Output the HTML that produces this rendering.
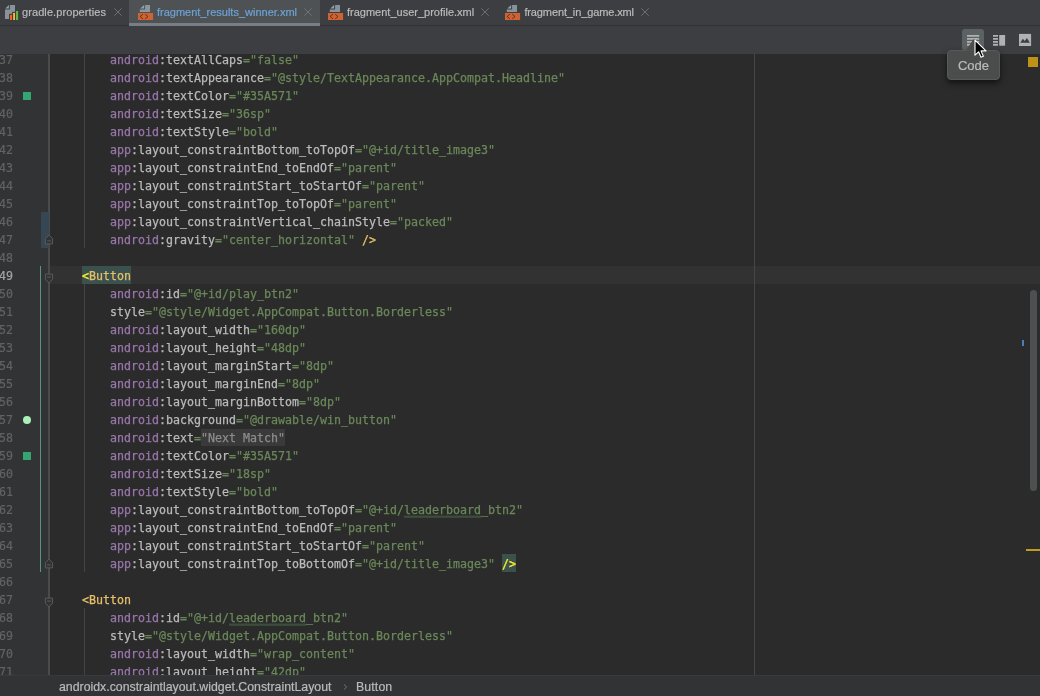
<!DOCTYPE html>
<html><head><meta charset="utf-8"><title>editor</title>
<style>
html,body{margin:0;padding:0;}
body{width:1040px;height:696px;overflow:hidden;background:#2b2b2b;position:relative;font-family:"Liberation Sans",sans-serif;}
.abs{position:absolute;}
#tabs{left:0;top:0;width:1040px;height:26px;background:#3c3e41;}
#tabline{left:0;top:25px;width:1040px;height:1px;background:#323232;}
#seltab{left:129px;top:0;width:191px;height:26px;background:#4e5254;}
#selul{left:129px;top:23px;width:191px;height:3px;background:#787e85;}
.tl{-webkit-text-stroke:.2px;position:absolute;top:5px;font-size:11px;line-height:15px;color:#bbbbbb;white-space:pre;}
.ico{position:absolute;top:5px;}
.cx{position:absolute;top:8px;}
#toolbar{left:0;top:26px;width:1040px;height:28px;background:#3c3e41;}
#editor{left:0;top:54px;width:1040px;height:621px;overflow:hidden;background:#2b2b2b;}
#gutter{left:0;top:0;width:48px;height:621px;background:#313335;}
#foldline{left:48px;top:0;width:2px;height:621px;background:#4b4b4b;}
#nums{left:-19px;top:-4px;width:32px;text-align:right;-webkit-text-stroke:.2px;font:11.63px/20px "DejaVu Sans Mono","Liberation Mono",monospace;color:#606366;}
#code{left:54px;top:-4px;font:11.63px/20px "DejaVu Sans Mono","Liberation Mono",monospace;color:#a9b7c6;white-space:pre;-webkit-text-stroke:0.25px;}
.ln,#nums div{height:18px;} .cur{color:#a4a3a3}
.ns{color:#9876aa} .an{color:#bababa} .s{color:#6a8759} .t{color:#e8bf6a}
.mt{color:#ffef28;background:#3b514d;display:inline-block;height:18px;vertical-align:top;} 
.fold{color:#8c8c8c;background:#3a3a3a;display:inline-block;height:17px;vertical-align:top;position:relative;top:.5px;line-height:19px;}
.sw{color:#6a8759;}
#caretrow{left:50px;top:212px;width:990px;height:18px;background:#323232;}
#margin{left:754px;top:0;width:1px;height:621px;background:#464646;}
.guide{position:absolute;width:1px;background:#444444;left:84px;}
#crumbs{left:0;top:675px;width:1040px;height:21px;background:#313335;box-shadow:inset 0 1px 0 #393a3d;}
#crumbs span{-webkit-text-stroke:.2px;position:absolute;top:4px;font-size:12.32px;line-height:17px;color:#bbbbbb;white-space:pre;}
#root{position:absolute;left:0;top:0;width:1040px;height:696px;overflow:hidden;will-change:transform;}
</style></head><body><div id="root">
<div id="tabs" class="abs"></div>
<div id="tabline" class="abs"></div>
<div id="seltab" class="abs"></div>
<div id="selul" class="abs"></div>
<svg class="ico" style="left:5px" width="16" height="16" viewBox="0 0 16 16"><path d="M3.9 0V3.6H0.3Z" fill="#9aa7b0" fill-opacity=".95"/><path d="M4.9 0H10V14H0V4.6H4.9Z" fill="#9aa7b0" fill-opacity=".8"/><rect x="4" y="8.8" width="4" height="7" fill="#3c3e41"/><rect x="7.1" y="6.9" width="4" height="9" fill="#3c3e41"/><rect x="10" y="5" width="4.2" height="11" fill="#3c3e41"/><rect x="5" y="9.8" width="2" height="5.2" fill="#f26522"/><rect x="8.1" y="7.9" width="1.9" height="7.1" fill="#f9b934"/><rect x="11" y="6" width="2.1" height="9" fill="#62b543"/></svg>
<span class="tl" style="left:22px;letter-spacing:.085px">gradle.properties</span>
<svg class="cx" style="left:114.1px" width="8" height="8" viewBox="0 0 8 8"><path d="M.3.3 7.7 7.7M7.7.3.3 7.7" stroke="#6c767b" stroke-width=".9" fill="none"/></svg>
<svg class="ico" style="left:138px" width="16" height="16" viewBox="0 0 16 16"><path d="M6.1 0V3.6H2.3Z" fill="#9aa7b0" fill-opacity=".95"/><path d="M7.1 0H12V7H1.8V4.6H7.1Z" fill="#9aa7b0" fill-opacity=".8"/><rect x="0" y="8" width="15.1" height="7" fill="#cf6230"/><path d="M4.9 9.2 2.1 11.5 4.9 13.8M7.2 9.2 10 11.5 7.2 13.8" stroke="#231f20" stroke-opacity=".8" stroke-width=".85" fill="none"/></svg>
<span class="tl" style="left:157px;color:#6ea2d4">fragment_results_winner.xml</span>
<svg class="cx" style="left:304px" width="8" height="8" viewBox="0 0 8 8"><path d="M.3.3 7.7 7.7M7.7.3.3 7.7" stroke="#6c767b" stroke-width=".9" fill="none"/></svg>
<svg class="ico" style="left:328px" width="16" height="16" viewBox="0 0 16 16"><path d="M6.1 0V3.6H2.3Z" fill="#9aa7b0" fill-opacity=".95"/><path d="M7.1 0H12V7H1.8V4.6H7.1Z" fill="#9aa7b0" fill-opacity=".8"/><rect x="0" y="8" width="15.1" height="7" fill="#cf6230"/><path d="M4.9 9.2 2.1 11.5 4.9 13.8M7.2 9.2 10 11.5 7.2 13.8" stroke="#231f20" stroke-opacity=".8" stroke-width=".85" fill="none"/></svg>
<span class="tl" style="left:347px">fragment_user_profile.xml</span>
<svg class="cx" style="left:481.4px" width="8" height="8" viewBox="0 0 8 8"><path d="M.3.3 7.7 7.7M7.7.3.3 7.7" stroke="#6c767b" stroke-width=".9" fill="none"/></svg>
<svg class="ico" style="left:505px" width="16" height="16" viewBox="0 0 16 16"><path d="M6.1 0V3.6H2.3Z" fill="#9aa7b0" fill-opacity=".95"/><path d="M7.1 0H12V7H1.8V4.6H7.1Z" fill="#9aa7b0" fill-opacity=".8"/><rect x="0" y="8" width="15.1" height="7" fill="#cf6230"/><path d="M4.9 9.2 2.1 11.5 4.9 13.8M7.2 9.2 10 11.5 7.2 13.8" stroke="#231f20" stroke-opacity=".8" stroke-width=".85" fill="none"/></svg>
<span class="tl" style="left:524.4px;letter-spacing:-.12px">fragment_in_game.xml</span>
<svg class="cx" style="left:641.4px" width="8" height="8" viewBox="0 0 8 8"><path d="M.3.3 7.7 7.7M7.7.3.3 7.7" stroke="#6c767b" stroke-width=".9" fill="none"/></svg>
<div id="toolbar" class="abs"></div>
<div id="editor" class="abs">
 <div id="caretrow" class="abs"></div>
 <div id="margin" class="abs"></div>
 <div id="gutter" class="abs"></div>
 <div id="foldline" class="abs"></div>
 <div class="guide" style="top:0;height:194px"></div>
 <div class="guide" style="top:230px;height:288px"></div>
 <div class="guide" style="top:554px;height:70px"></div>

 <div class="abs" style="left:41px;top:158px;width:7.6px;height:36px;background:#364652"></div>
 <div class="abs" style="left:40px;top:212px;width:1px;height:306px;background:#5b928c"></div>
 <div class="abs" style="left:23px;top:38px;width:8px;height:8px;background:#35a571"></div>
 <div class="abs" style="left:23px;top:398px;width:8px;height:8px;background:#35a571"></div>
 <div class="abs" style="left:23px;top:361.6px;width:8.4px;height:8.6px;border-radius:50%;background:#aaf0b9"></div>
 <svg class="abs fm" style="left:44px;top:180px" width="10" height="11" viewBox="0 0 10 11"><path d="M1.4 9.9V4.6L5 1.1 8.6 4.6V9.9Z" fill="#313335" stroke="#5e5e5e" stroke-width="0.9"/><path d="M3.2 6.9h3.6" stroke="#5a5a5a" stroke-width="1.1"/></svg>
 <svg class="abs fm" style="left:44px;top:504px" width="10" height="11" viewBox="0 0 10 11"><path d="M1.4 9.9V4.6L5 1.1 8.6 4.6V9.9Z" fill="#313335" stroke="#5e5e5e" stroke-width="0.9"/><path d="M3.2 6.9h3.6" stroke="#5a5a5a" stroke-width="1.1"/></svg>
 <svg class="abs fm" style="left:44px;top:218.5px" width="10" height="11" viewBox="0 0 10 11"><path d="M1.4 1.1V6.4L5 9.9 8.6 6.4V1.1Z" fill="#313335" stroke="#5e5e5e" stroke-width="0.9"/><path d="M3.2 4.1h3.6" stroke="#5a5a5a" stroke-width="1.1"/></svg>
 <svg class="abs fm" style="left:44px;top:542.5px" width="10" height="11" viewBox="0 0 10 11"><path d="M1.4 1.1V6.4L5 9.9 8.6 6.4V1.1Z" fill="#313335" stroke="#5e5e5e" stroke-width="0.9"/><path d="M3.2 4.1h3.6" stroke="#5a5a5a" stroke-width="1.1"/></svg>
 <div class="abs" style="left:1030px;top:236px;width:7px;height:201px;border-radius:3.5px;background:#4d4f50"></div>
 <div class="abs" style="left:1022px;top:286px;width:2px;height:6px;background:#4a7fb5"></div>
 <div class="abs" style="left:1026px;top:495px;width:14px;height:2px;background:#c29a1e"></div>
 <div class="abs" style="left:1028px;top:3px;width:10px;height:10px;background:#be9117"></div>
 <svg class="abs" style="left:403.5px;top:461px" width="78" height="4" viewBox="0 0 78 4"><polyline points="0,2.9 1,0.5 2,2.9 3,0.5 4,2.9 5,0.5 6,2.9 7,0.5 8,2.9 9,0.5 10,2.9 11,0.5 12,2.9 13,0.5 14,2.9 15,0.5 16,2.9 17,0.5 18,2.9 19,0.5 20,2.9 21,0.5 22,2.9 23,0.5 24,2.9 25,0.5 26,2.9 27,0.5 28,2.9 29,0.5 30,2.9 31,0.5 32,2.9 33,0.5 34,2.9 35,0.5 36,2.9 37,0.5 38,2.9 39,0.5 40,2.9 41,0.5 42,2.9 43,0.5 44,2.9 45,0.5 46,2.9 47,0.5 48,2.9 49,0.5 50,2.9 51,0.5 52,2.9 53,0.5 54,2.9 55,0.5 56,2.9 57,0.5 58,2.9 59,0.5 60,2.9 61,0.5 62,2.9 63,0.5 64,2.9 65,0.5 66,2.9 67,0.5 68,2.9 69,0.5 70,2.9 71,0.5 72,2.9 73,0.5 74,2.9 75,0.5 76,2.9 77,0.5" fill="none" stroke="#62925f" stroke-opacity=".5" stroke-width="0.7"/></svg>
 <svg class="abs" style="left:228.5px;top:569px" width="78" height="4" viewBox="0 0 78 4"><polyline points="0,2.9 1,0.5 2,2.9 3,0.5 4,2.9 5,0.5 6,2.9 7,0.5 8,2.9 9,0.5 10,2.9 11,0.5 12,2.9 13,0.5 14,2.9 15,0.5 16,2.9 17,0.5 18,2.9 19,0.5 20,2.9 21,0.5 22,2.9 23,0.5 24,2.9 25,0.5 26,2.9 27,0.5 28,2.9 29,0.5 30,2.9 31,0.5 32,2.9 33,0.5 34,2.9 35,0.5 36,2.9 37,0.5 38,2.9 39,0.5 40,2.9 41,0.5 42,2.9 43,0.5 44,2.9 45,0.5 46,2.9 47,0.5 48,2.9 49,0.5 50,2.9 51,0.5 52,2.9 53,0.5 54,2.9 55,0.5 56,2.9 57,0.5 58,2.9 59,0.5 60,2.9 61,0.5 62,2.9 63,0.5 64,2.9 65,0.5 66,2.9 67,0.5 68,2.9 69,0.5 70,2.9 71,0.5 72,2.9 73,0.5 74,2.9 75,0.5 76,2.9 77,0.5" fill="none" stroke="#62925f" stroke-opacity=".5" stroke-width="0.7"/></svg>
 <div id="nums" class="abs">
<div>37</div>
<div>38</div>
<div>39</div>
<div>40</div>
<div>41</div>
<div>42</div>
<div>43</div>
<div>44</div>
<div>45</div>
<div>46</div>
<div>47</div>
<div>48</div>
<div class="cur">49</div>
<div>50</div>
<div>51</div>
<div>52</div>
<div>53</div>
<div>54</div>
<div>55</div>
<div>56</div>
<div>57</div>
<div>58</div>
<div>59</div>
<div>60</div>
<div>61</div>
<div>62</div>
<div>63</div>
<div>64</div>
<div>65</div>
<div>66</div>
<div>67</div>
<div>68</div>
<div>69</div>
<div>70</div>
<div>71</div>
 </div>
 <div id="code" class="abs"><div class="ln">        <span class="ns">android</span><span class="an">:textAllCaps</span><span class="s">="false"</span></div><div class="ln">        <span class="ns">android</span><span class="an">:textAppearance</span><span class="s">="@style/TextAppearance.AppCompat.Headline"</span></div><div class="ln">        <span class="ns">android</span><span class="an">:textColor</span><span class="s">="#35A571"</span></div><div class="ln">        <span class="ns">android</span><span class="an">:textSize</span><span class="s">="36sp"</span></div><div class="ln">        <span class="ns">android</span><span class="an">:textStyle</span><span class="s">="bold"</span></div><div class="ln">        <span class="ns">app</span><span class="an">:layout_constraintBottom_toTopOf</span><span class="s">="@+id/title_image3"</span></div><div class="ln">        <span class="ns">app</span><span class="an">:layout_constraintEnd_toEndOf</span><span class="s">="parent"</span></div><div class="ln">        <span class="ns">app</span><span class="an">:layout_constraintStart_toStartOf</span><span class="s">="parent"</span></div><div class="ln">        <span class="ns">app</span><span class="an">:layout_constraintTop_toTopOf</span><span class="s">="parent"</span></div><div class="ln">        <span class="ns">app</span><span class="an">:layout_constraintVertical_chainStyle</span><span class="s">="packed"</span></div><div class="ln">        <span class="ns">android</span><span class="an">:gravity</span><span class="s">="center_horizontal"</span><span class="t"> /&gt;</span></div><div class="ln"></div><div class="ln">    <span class="mt">&lt;<span class="t">Button</span></span></div><div class="ln">        <span class="ns">android</span><span class="an">:id</span><span class="s">="@+id/play_btn2"</span></div><div class="ln">        <span class="an">style</span><span class="s">="@style/Widget.AppCompat.Button.Borderless"</span></div><div class="ln">        <span class="ns">android</span><span class="an">:layout_width</span><span class="s">="160dp"</span></div><div class="ln">        <span class="ns">android</span><span class="an">:layout_height</span><span class="s">="48dp"</span></div><div class="ln">        <span class="ns">android</span><span class="an">:layout_marginStart</span><span class="s">="8dp"</span></div><div class="ln">        <span class="ns">android</span><span class="an">:layout_marginEnd</span><span class="s">="8dp"</span></div><div class="ln">        <span class="ns">android</span><span class="an">:layout_marginBottom</span><span class="s">="8dp"</span></div><div class="ln">        <span class="ns">android</span><span class="an">:background</span><span class="s">="@drawable/win_button"</span></div><div class="ln">        <span class="ns">android</span><span class="an">:text</span><span class="s">=</span><span class="fold">"Next Match"</span></div><div class="ln">        <span class="ns">android</span><span class="an">:textColor</span><span class="s">="#35A571"</span></div><div class="ln">        <span class="ns">android</span><span class="an">:textSize</span><span class="s">="18sp"</span></div><div class="ln">        <span class="ns">android</span><span class="an">:textStyle</span><span class="s">="bold"</span></div><div class="ln">        <span class="ns">app</span><span class="an">:layout_constraintBottom_toTopOf</span><span class="s">="@+id/</span><span class="sw">leaderboard</span><span class="s">_btn2"</span></div><div class="ln">        <span class="ns">app</span><span class="an">:layout_constraintEnd_toEndOf</span><span class="s">="parent"</span></div><div class="ln">        <span class="ns">app</span><span class="an">:layout_constraintStart_toStartOf</span><span class="s">="parent"</span></div><div class="ln">        <span class="ns">app</span><span class="an">:layout_constraintTop_toBottomOf</span><span class="s">="@+id/title_image3"</span><span class="t"> </span><span class="mt">/&gt;</span></div><div class="ln"></div><div class="ln">    <span class="t">&lt;Button</span></div><div class="ln">        <span class="ns">android</span><span class="an">:id</span><span class="s">="@+id/</span><span class="sw">leaderboard</span><span class="s">_btn2"</span></div><div class="ln">        <span class="an">style</span><span class="s">="@style/Widget.AppCompat.Button.Borderless"</span></div><div class="ln">        <span class="ns">android</span><span class="an">:layout_width</span><span class="s">="wrap_content"</span></div><div class="ln">        <span class="ns">android</span><span class="an">:layout_height</span><span class="s">="42dp"</span></div></div>
</div>

<div class="abs" style="left:962px;top:29px;width:22px;height:22px;border-radius:3px;background:#5c6164"></div>
<svg class="abs" style="left:960px;top:28px" width="80" height="24" viewBox="960 28 80 24"><path d="M967 35.9h12.2M967 38.85h12.2M967 41.8h12.2M967 44.75h12.2" stroke="#afb1b3" stroke-width="1.8"/><path d="M993 35.9h5M993 38.85h5M993 41.8h5M993 44.75h5" stroke="#afb1b3" stroke-width="1.8"/><rect x="999.2" y="35" width="5.9" height="10.7" fill="#afb1b3"/><rect x="1019" y="33.9" width="12.1" height="12.1" fill="#afb1b3"/><path d="M1020.2 42.7 1022.9 38.8 1024.8 41.1 1026.9 37.9 1029.9 42.7Z" fill="#3c3e41"/></svg>
<div class="abs" style="left:947px;top:50px;width:53px;height:30px;border-radius:4px;background:#4b4d4d;border:1px solid #58595a;box-sizing:border-box;box-shadow:0 3px 6px rgba(0,0,0,.6);"></div>
<span class="abs" style="left:947px;top:58px;width:53px;text-align:center;font-size:13px;line-height:16px;color:#bbbbbb;-webkit-text-stroke:.2px">Code</span>
<svg class="abs" style="left:960px;top:36px" width="20" height="16" viewBox="960 36 20 16"><path d="M973.2 39.6 966 50.5H975V39.6Z" fill="#4b4d4d" style="filter:blur(.4px)"/></svg>
<svg class="abs" style="left:971.5px;top:38px" width="16" height="22" viewBox="0 0 16 22"><path d="M3 2.2V17.2L6.6 13.8 9 19.3 11.4 18.3 9 12.9H14Z" fill="#000" stroke="#fff" stroke-width="1.1" stroke-linejoin="round"/></svg>
<div id="crumbs" class="abs"><span style="left:59px">androidx.constraintlayout.widget.ConstraintLayout</span><svg style="position:absolute;left:340px;top:6px" width="10" height="12" viewBox="340 681 10 12"><path d="M343.9 684.4 346.7 687 343.9 689.6" fill="none" stroke="#707274" stroke-width="1"/></svg><span style="left:356px;letter-spacing:.12px">Button</span></div>
</div></body></html>
